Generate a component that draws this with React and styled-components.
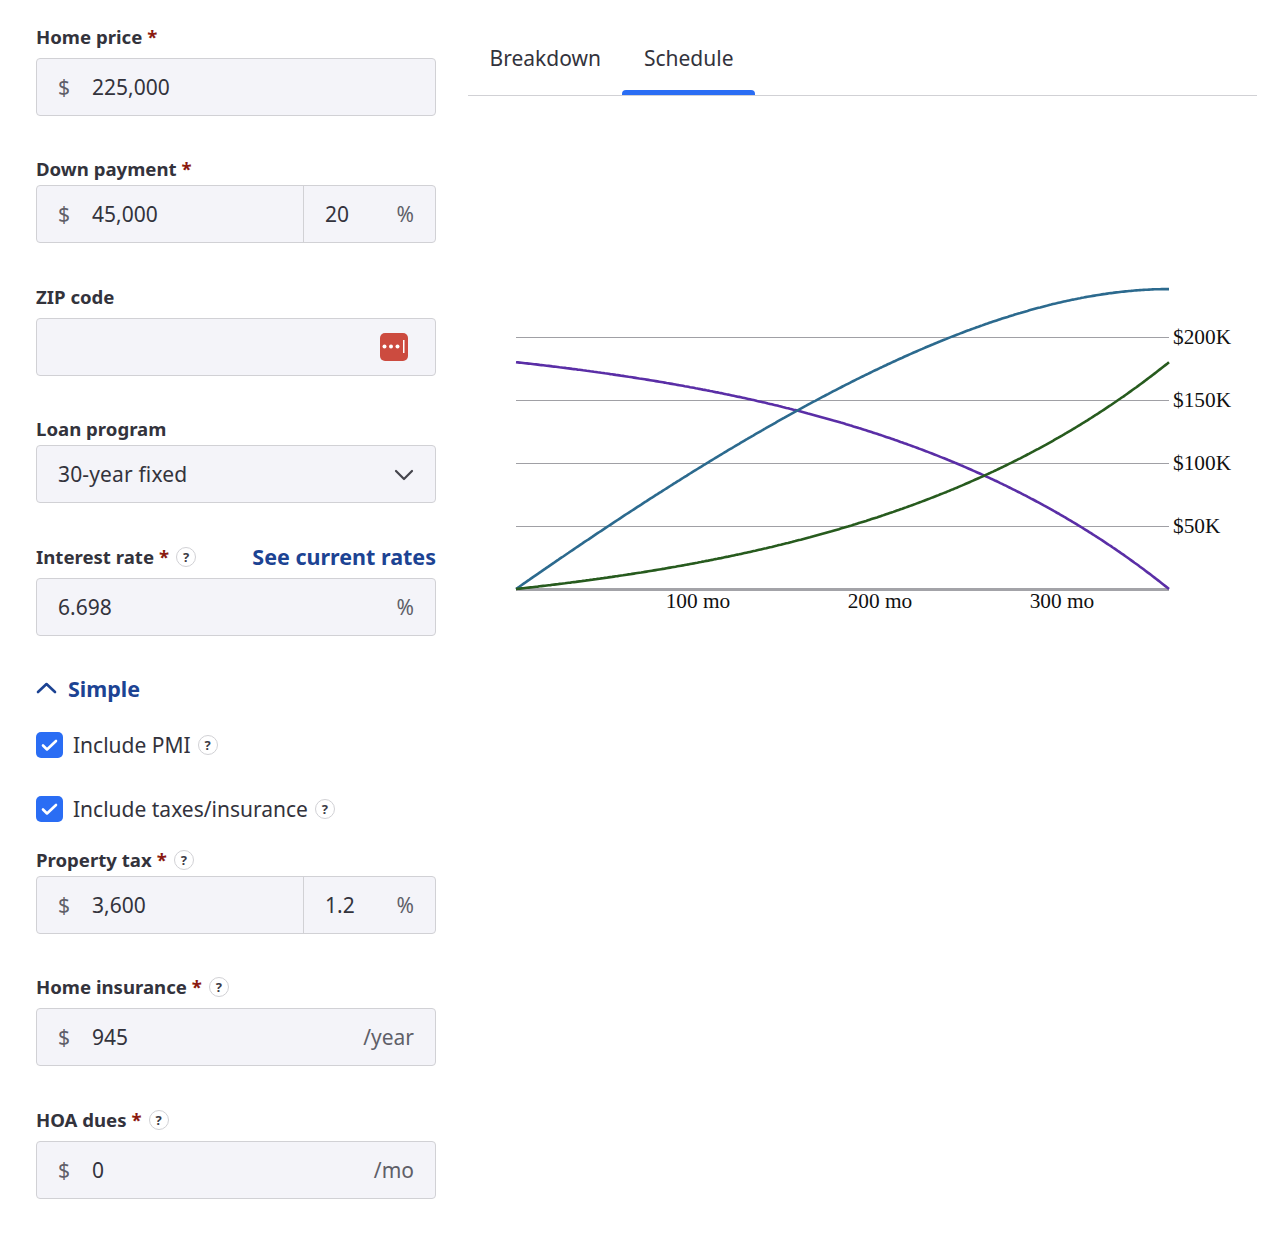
import React from 'react';
import styled, { createGlobalStyle } from 'styled-components';

const Global = createGlobalStyle`
  html, body { margin: 0; padding: 0; background: #fff; }
  body { font-family: "Noto Sans", "Open Sans", sans-serif; color: #2a2a33; }
`;

const Page = styled.div`
  width: 1274px;
  height: 1240px;
  display: flex;
  gap: 32px;
  padding: 0 17px 0 36px;
  box-sizing: border-box;
  overflow: hidden;
`;

const Form = styled.form`
  width: 400px;
  flex: none;
  padding-top: 24px;
  display: flex;
  flex-direction: column;
`;

const Field = styled.div`
  margin-top: ${p => p.$top || 0}px;
`;

const LabelRow = styled.div`
  height: ${p => p.$h || 26}px;
  display: flex;
  align-items: flex-start;
  justify-content: space-between;
`;

const LabelGroup = styled.div`
  display: flex;
  align-items: center;
  height: 26px;
`;

const Label = styled.span`
  font-size: 18.6px;
  font-weight: 700;
  line-height: 26px;
  color: #33333c;
  white-space: nowrap;
`;

const Required = styled.span`
  color: #8b1a10;
  font-weight: 700;
  margin-left: 5px;
`;

const Help = styled.span`
  width: 20px;
  height: 20px;
  box-sizing: border-box;
  margin-left: ${p => p.$left || 7}px;
  border: 1px solid #d1d1d5;
  border-radius: 50%;
  display: inline-flex;
  align-items: center;
  justify-content: center;
  font-size: 13px;
  font-weight: 700;
  color: #3b3b44;
  background: #fff;
  flex: none;
`;

const RateLink = styled.a`
  font-size: 21.5px;
  font-weight: 700;
  line-height: 26px;
  color: #1c4393;
  text-decoration: none;
`;

const InputBox = styled.div`
  height: 58px;
  box-sizing: border-box;
  background: #f4f4f9;
  border: 1px solid #d1d1d5;
  border-radius: 4px;
  display: flex;
  align-items: center;
  font-size: 21px;
  color: #33333c;
`;

const Segment = styled.div`
  flex: 1;
  height: 100%;
  display: flex;
  align-items: center;
  padding: 0 21px;
  min-width: 0;
`;

const PercentSegment = styled(Segment)`
  flex: none;
  width: 132px;
  box-sizing: border-box;
  border-left: 1px solid #d1d1d5;
  justify-content: space-between;
`;

const Prefix = styled.span`
  width: 34px;
  flex: none;
  color: #5f5f68;
`;

const Value = styled.span`
  flex: 1;
`;

const SelectValue = styled.span`
  letter-spacing: 0.15px;
`;

const Suffix = styled.span`
  color: #5f5f68;
`;

const KeyBadge = styled.svg`
  margin-left: auto;
  margin-right: 6px;
  display: block;
`;

const Chevron = styled.svg`
  margin-left: auto;
  margin-top: 2px;
  display: block;
`;

const Toggle = styled.div`
  margin-top: 37px;
  height: 30px;
  display: flex;
  align-items: center;
  gap: 11px;
  font-size: 21.5px;
  font-weight: 700;
  color: #1c4393;
`;

const CheckRow = styled.div`
  margin-top: ${p => p.$top}px;
  height: 26px;
  display: flex;
  align-items: center;
  font-size: 21px;
  color: #33333c;
`;

const CheckBox = styled.span`
  width: 27px;
  height: 26px;
  border-radius: 5px;
  background: #2a6df4;
  display: flex;
  align-items: center;
  justify-content: center;
  margin-right: 10px;
  flex: none;
`;

const Results = styled.section`
  flex: 1;
  min-width: 0;
`;

const Tabs = styled.div`
  margin-top: 20px;
  height: 76px;
  box-sizing: border-box;
  border-bottom: 1px solid #d1d1d5;
  display: flex;
`;

const Tab = styled.div`
  position: relative;
  height: 75px;
  padding: 0 21.5px;
  display: flex;
  align-items: center;
  box-sizing: border-box;
  font-size: 21px;
  color: #33333c;
  ${p => p.$active && `
    &::after {
      content: '';
      position: absolute;
      left: 0;
      right: 0;
      bottom: 0;
      height: 5px;
      background: #2a6df4;
      border-radius: 4px 4px 0 0;
    }
  `}
`;

const ChartWrap = styled.div`
  margin-top: 166px;
`;

const ChartSvg = styled.svg`
  display: block;
  font-family: "Liberation Serif", "Times New Roman", serif;
  font-size: 21.33px;
`;

/* chart computed from loan figures */
const P = 180000, r = 0.06698 / 12, N = 360;
const pay = P * r / (1 - Math.pow(1 + r, -N));
const OX = 48, X1 = 701, OY = 327;
const px = m => OX + (m / N) * (X1 - OX);
const py = v => OY - v * 63 / 50000;
const series = () => {
  let bal = P, int = 0;
  const a = [[px(0), py(P)]], b = [[px(0), py(0)]], c = [[px(0), py(0)]];
  for (let m = 1; m <= N; m++) {
    const i = bal * r;
    int += i;
    bal -= pay - i;
    a.push([px(m), py(Math.max(bal, 0))]);
    b.push([px(m), py(int)]);
    c.push([px(m), py(P - Math.max(bal, 0))]);
  }
  return [a, b, c].map(s => s.map(q => q[0].toFixed(1) + ',' + q[1].toFixed(1)).join(' '));
};
const [balance, interest, principal] = series();

const Chart = () => (
  <ChartSvg width="789" height="400" viewBox="0 0 789 400">
    {[50, 100, 150, 200].map(k => (
      <g key={k}>
        <line x1={OX} x2={X1} y1={py(k * 1000) + 0.5} y2={py(k * 1000) + 0.5} stroke="#a0a0a5" strokeWidth="1" />
        <text x={X1 + 4} y={py(k * 1000) + 7} fill="#111">${k}K</text>
      </g>
    ))}
    <line x1={OX} x2={X1} y1={OY + 0.5} y2={OY + 0.5} stroke="#a3a3a8" strokeWidth="3" />
    {[100, 200, 300].map(m => (
      <text key={m} x={OX + m * 1.82} y={OY + 19} textAnchor="middle" fill="#111">{m} mo</text>
    ))}
    <polyline points={balance} fill="none" stroke="#5a2ea6" strokeWidth="2.6" />
    <polyline points={interest} fill="none" stroke="#2c6a8e" strokeWidth="2.6" />
    <polyline points={principal} fill="none" stroke="#275b1e" strokeWidth="2.6" />
  </ChartSvg>
);

const Check = () => (
  <svg width="17" height="13" viewBox="0 0 17 13" fill="none">
    <path d="M2 6.5 6 10.5 15 2" stroke="#fff" strokeWidth="2.6" strokeLinecap="round" strokeLinejoin="round" />
  </svg>
);

export default function App() {
  return (
    <Page>
      <Global />
      <Form>
        <Field>
          <LabelRow $h={34}><LabelGroup><Label>Home price<Required>*</Required></Label></LabelGroup></LabelRow>
          <InputBox><Segment><Prefix>$</Prefix><Value>225,000</Value></Segment></InputBox>
        </Field>
        <Field $top={40}>
          <LabelRow $h={29}><LabelGroup><Label>Down payment<Required>*</Required></Label></LabelGroup></LabelRow>
          <InputBox>
            <Segment><Prefix>$</Prefix><Value>45,000</Value></Segment>
            <PercentSegment><span>20</span><Suffix>%</Suffix></PercentSegment>
          </InputBox>
        </Field>
        <Field $top={41}>
          <LabelRow $h={34}><LabelGroup><Label>ZIP code</Label></LabelGroup></LabelRow>
          <InputBox>
            <Segment>
              <KeyBadge width="28" height="28" viewBox="0 0 28 28">
                <rect width="28" height="28" rx="5" fill="#cc4b3f" />
                <circle cx="4.5" cy="13.5" r="2" fill="#fff" />
                <circle cx="11" cy="13.5" r="2" fill="#fff" />
                <circle cx="17.5" cy="13.5" r="2" fill="#fff" />
                <rect x="23" y="7" width="1.5" height="13" fill="#fff" />
              </KeyBadge>
            </Segment>
          </InputBox>
        </Field>
        <Field $top={40}>
          <LabelRow $h={29}><LabelGroup><Label>Loan program</Label></LabelGroup></LabelRow>
          <InputBox>
            <Segment>
              <SelectValue>30-year fixed</SelectValue>
              <Chevron width="20" height="12" viewBox="0 0 20 12" fill="none">
                <path d="M2 2 10 10 18 2" stroke="#44444c" strokeWidth="2.2" strokeLinecap="round" strokeLinejoin="round" />
              </Chevron>
            </Segment>
          </InputBox>
        </Field>
        <Field $top={41}>
          <LabelRow $h={34}>
            <LabelGroup><Label>Interest rate<Required>*</Required></Label><Help>?</Help></LabelGroup>
            <RateLink href="#">See current rates</RateLink>
          </LabelRow>
          <InputBox><Segment><Value>6.698</Value><Suffix>%</Suffix></Segment></InputBox>
        </Field>
        <Toggle>
          <svg width="21" height="12" viewBox="0 0 21 12" fill="none">
            <path d="M2 10 10.5 2 19 10" stroke="#1c4393" strokeWidth="2.6" strokeLinecap="round" strokeLinejoin="round" />
          </svg>
          <span>Simple</span>
        </Toggle>
        <CheckRow $top={29}><CheckBox><Check /></CheckBox>Include PMI<Help>?</Help></CheckRow>
        <CheckRow $top={38}><CheckBox><Check /></CheckBox>Include taxes/insurance<Help>?</Help></CheckRow>
        <Field $top={25}>
          <LabelRow $h={29}><LabelGroup><Label>Property tax<Required>*</Required></Label><Help>?</Help></LabelGroup></LabelRow>
          <InputBox>
            <Segment><Prefix>$</Prefix><Value>3,600</Value></Segment>
            <PercentSegment><span>1.2</span><Suffix>%</Suffix></PercentSegment>
          </InputBox>
        </Field>
        <Field $top={40}>
          <LabelRow $h={34}><LabelGroup><Label>Home insurance<Required>*</Required></Label><Help>?</Help></LabelGroup></LabelRow>
          <InputBox><Segment><Prefix>$</Prefix><Value>945</Value><Suffix>/year</Suffix></Segment></InputBox>
        </Field>
        <Field $top={41}>
          <LabelRow $h={34}><LabelGroup><Label>HOA dues<Required>*</Required></Label><Help>?</Help></LabelGroup></LabelRow>
          <InputBox><Segment><Prefix>$</Prefix><Value>0</Value><Suffix>/mo</Suffix></Segment></InputBox>
        </Field>
      </Form>
      <Results>
        <Tabs>
          <Tab>Breakdown</Tab>
          <Tab $active>Schedule</Tab>
        </Tabs>
        <ChartWrap><Chart /></ChartWrap>
      </Results>
    </Page>
  );
}
